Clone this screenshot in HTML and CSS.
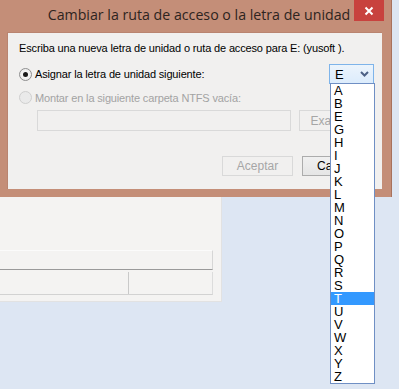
FILE: index.html
```html
<!DOCTYPE html>
<html lang="es">
<head>
    <meta charset="UTF-8">
    <meta name="viewport" content="width=device-width, initial-scale=1.0">
    <title>Cambiar la ruta de acceso o la letra de unidad</title>
    <link rel="stylesheet" href="styles.css">
</head>
<body>

<div class="desktop">
    <div class="dialog">
        <div class="titlebar">
            <span class="title">Cambiar la ruta de acceso o la letra de unidad</span>
            <span class="close">
                <svg width="10" height="10" viewBox="0 0 10 10">
                    <path d="M1.5 1.5 L8.5 8.5 M8.5 1.5 L1.5 8.5" stroke="#fff" stroke-width="2"/>
                </svg>
            </span>
        </div>

        <div class="client">
            <p class="intro">Escriba una nueva letra de unidad o ruta de acceso para E: (yusoft ).</p>

            <div class="row first">
                <label class="radio"><span class="dot checked"></span>Asignar la letra de unidad siguiente:</label>
                <div class="combo">
                    <span>E</span>
                    <svg width="9" height="6" viewBox="0 0 9 6">
                        <path d="M1 1 L4.5 4.5 L8 1" fill="none" stroke="#4d6185" stroke-width="2"/>
                    </svg>
                </div>
            </div>

            <div class="row">
                <label class="radio disabled"><span class="dot"></span>Montar en la siguiente carpeta NTFS vacía:</label>
            </div>

            <div class="path-row">
                <div class="textbox"></div>
                <div class="btn disabled">Examinar...</div>
            </div>

            <div class="actions">
                <div class="btn disabled">Aceptar</div>
                <div class="btn">Cancelar</div>
            </div>
        </div>
    </div>

    <div class="behind">
        <div class="field"></div>
        <div class="table">
            <div class="cell first-cell"></div>
            <div class="cell"></div>
        </div>
    </div>

    <ul class="droplist">
        <li>A</li>
        <li>B</li>
        <li>E</li>
        <li>G</li>
        <li>H</li>
        <li>I</li>
        <li>J</li>
        <li>K</li>
        <li>L</li>
        <li>M</li>
        <li>N</li>
        <li>O</li>
        <li>P</li>
        <li>Q</li>
        <li>R</li>
        <li>S</li>
        <li class="selected">T</li>
        <li>U</li>
        <li>V</li>
        <li>W</li>
        <li>X</li>
        <li>Y</li>
        <li>Z</li>
    </ul>
</div>

</body>
</html>
```

FILE: styles.css
```css
body {
    margin: 0;
    font-family: "Liberation Sans", Arial, sans-serif;
    font-size: 11px;
    letter-spacing: -0.15px;
    color: #000;
    background-color: #dde6f3;
}

.desktop {
    position: relative;
    width: 399px;
    height: 389px;
    overflow: hidden;
}

/* dialog window */
.dialog {
    width: 392px;
    background-color: #c48e78;
    padding: 0 9px 8px 7px;
    box-sizing: border-box;
    border-right: 1px solid #a8725d;
}

.titlebar {
    display: flex;
    align-items: flex-start;
    height: 32px;
}

.title {
    flex: 1;
    min-width: 0;
    padding-left: 37px;
    padding-top: 5px;
    text-align: center;
    font-family: "Open Sans", sans-serif;
    font-size: 14.2px;
    letter-spacing: 0;
    color: #2e2420;
    white-space: nowrap;
}

.close {
    flex: none;
    display: flex;
    align-items: center;
    justify-content: center;
    width: 30px;
    height: 21px;
    margin-right: -2px;
    background-color: #c8423e;
}

.client {
    height: 157px;
    background-color: #f1f0ef;
    padding: 8px 8px 0 11px;
    box-sizing: border-box;
    border: 1px solid #b98470;
    border-width: 1px 0 0 1px;
}

.intro {
    margin: 0;
    line-height: 15px;
    white-space: nowrap;
}

.row {
    display: flex;
    align-items: center;
    justify-content: space-between;
    margin-top: 6px;
    height: 15px;
}

.row.first {
    margin-top: 8px;
    height: 20px;
}

.radio {
    display: flex;
    align-items: center;
    gap: 3px;
}

.radio.disabled {
    color: #a3a3a3;
}

.dot {
    width: 11px;
    height: 11px;
    border: 1px solid #8f8f8f;
    border-radius: 50%;
    background: radial-gradient(circle, #fff, #e6e6e6);
    display: flex;
    align-items: center;
    justify-content: center;
}

.dot.checked::after {
    content: "";
    width: 5px;
    height: 5px;
    border-radius: 50%;
    background-color: #1b1b1b;
}

.radio.disabled .dot {
    border-color: #cfcfcf;
    background: #eaeaea;
}

.combo {
    display: flex;
    align-items: center;
    justify-content: space-between;
    width: 45px;
    height: 20px;
    padding: 0 4px 0 5px;
    box-sizing: border-box;
    border: 1px solid #7eb4ea;
    background: linear-gradient(#ecf4fc, #dcecfc);
    font-size: 13px;
    letter-spacing: 0;
}

.path-row {
    display: flex;
    gap: 8px;
    margin-top: 5px;
    padding-left: 18px;
}

.textbox {
    width: 256px;
    height: 21px;
    border: 1px solid #d9d9d9;
    box-sizing: border-box;
    background-color: #f1f0ef;
}

.btn {
    display: flex;
    align-items: center;
    justify-content: center;
    width: 75px;
    height: 21px;
    box-sizing: border-box;
    border: 1px solid #acacac;
    background: linear-gradient(#f0f0f0, #e5e5e5);
    color: #000;
    font-size: 12px;
    letter-spacing: 0;
}

.btn.disabled {
    border-color: #d9d9d9;
    background: #f1f0ef;
    color: #a6a6a6;
}

.path-row .btn {
    justify-content: flex-start;
    padding-left: 10px;
}

.actions {
    display: flex;
    gap: 9px;
    margin-top: 25px;
    padding-left: 203px;
}

.actions .btn {
    width: 71px;
    height: 20px;
}

.actions .btn + .btn {
    justify-content: flex-start;
    padding-left: 14px;
}

/* window behind the dialog */
.behind {
    width: 222px;
    height: 105px;
    padding-top: 53px;
    box-sizing: border-box;
    background-color: #f4f3f2;
    border-right: 1px solid #e2e2e2;
    border-bottom: 1px solid #e2e2e2;
}

.field {
    width: 213px;
    height: 20px;
    box-sizing: border-box;
    border-top: 1px solid #fbfbfb;
    border-right: 1px solid #d6d6d6;
    border-bottom: 1px solid #9a9a9a;
}

.table {
    display: flex;
    width: 213px;
    height: 23px;
    margin-top: 2px;
    box-sizing: border-box;
    border-right: 1px solid #dcdcdc;
    border-bottom: 1px solid #d2d2d2;
}

.cell {
    flex: 1;
}

.first-cell {
    flex: none;
    width: 128px;
    border-right: 1px solid #c9c9c9;
}

/* open drop-down list of the combo box */
.droplist {
    position: absolute;
    left: 330px;
    top: 83px;
    width: 45px;
    margin: 0;
    padding: 0;
    list-style: none;
    box-sizing: border-box;
    border: 1px solid #6f8fc4;
    background-color: #fff;
    font-size: 13px;
    letter-spacing: 0;
}

.droplist li {
    height: 13px;
    line-height: 13px;
    padding-left: 3px;
}

.droplist .selected {
    background-color: #3399ff;
    color: #fff;
}
```
